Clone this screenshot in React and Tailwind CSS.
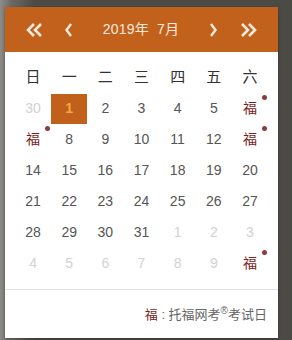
const weeks = ["日", "一", "二", "三", "四", "五", "六"];

// [label, kind] kind: "o" other month, "n" normal, "s" selected, "f" exam day
const days = [
  ["30", "o"], ["1", "s"], ["2", "n"], ["3", "n"], ["4", "n"], ["5", "n"], ["福", "f"],
  ["福", "f"], ["8", "n"], ["9", "n"], ["10", "n"], ["11", "n"], ["12", "n"], ["福", "f"],
  ["14", "n"], ["15", "n"], ["16", "n"], ["17", "n"], ["18", "n"], ["19", "n"], ["20", "n"],
  ["21", "n"], ["22", "n"], ["23", "n"], ["24", "n"], ["25", "n"], ["26", "n"], ["27", "n"],
  ["28", "n"], ["29", "n"], ["30", "n"], ["31", "n"], ["1", "o"], ["2", "o"], ["3", "o"],
  ["4", "o"], ["5", "o"], ["6", "o"], ["7", "o"], ["8", "o"], ["9", "o"], ["福", "f"],
];

function Chevron({ double, flip }) {
  return (
    <svg width={double ? 18 : 10} height="16" viewBox={double ? "0 0 18 16" : "0 0 10 16"} className={flip ? "-scale-x-100" : ""}>
      {double ? (
        <>
          <path d="M9 2 L3 8 L9 14" fill="none" stroke="#fbe9dc" strokeWidth="2.6" />
          <path d="M16 2 L10 8 L16 14" fill="none" stroke="#fbe9dc" strokeWidth="2.6" />
        </>
      ) : (
        <path d="M7 2 L2.5 8 L7 14" fill="none" stroke="#fbe9dc" strokeWidth="2.4" />
      )}
    </svg>
  );
}

function Day({ label, kind }) {
  if (kind === "s") {
    return (
      <div className="flex h-[31px] items-center justify-center">
        <div className="flex h-[30px] w-[36px] items-center justify-center bg-[#c1601b] text-[14px] font-bold text-[#f4a640]">
          {label}
        </div>
      </div>
    );
  }
  if (kind === "f") {
    return (
      <div className="relative flex h-[31px] items-center justify-center text-[14px] text-[#7c1f22]">
        {label}
        <span className="absolute left-[30px] top-[2px] h-[5px] w-[5px] rounded-full bg-[#8c3b3e]" />
      </div>
    );
  }
  return (
    <div className={"flex h-[31px] items-center justify-center text-[14px] " + (kind === "o" ? "text-[#d2d2d2]" : "text-[#555555]")}>
      {label}
    </div>
  );
}

export default function App() {
  return (
    <div
      className="h-[340px] w-[292px] bg-[linear-gradient(to_right,#8d8b88_0%,#6b6965_4%,#4c4a45_12%,#4c4a45_100%)] pl-[5px] pt-[7px]"
      style={{ fontFamily: '"Liberation Sans", "Noto Sans CJK SC", sans-serif' }}
    >
      <div className="w-[273px] bg-white shadow-[0_1px_3px_rgba(0,0,0,0.3)]">
        {/* header */}
        <div className="flex h-[45px] items-center bg-[#c2611c] px-[10px] text-[#fbe9dc]">
          <div className="flex w-[36px] justify-center pl-[1px]"><Chevron double /></div>
          <div className="flex w-[36px] justify-center"><Chevron /></div>
          <div className="flex w-[108px] justify-center text-[14px] tracking-[0.2px]">2019年&nbsp;&nbsp;7月</div>
          <div className="flex w-[36px] justify-center"><Chevron flip /></div>
          <div className="flex w-[36px] justify-center"><Chevron double flip /></div>
        </div>

        {/* body */}
        <div className="px-[10px] pt-[10px]">
          <div className="grid grid-cols-7">
            {weeks.map((w) => (
              <div key={w} className="flex h-[31px] items-center justify-center text-[15px] text-[#333333]">
                {w}
              </div>
            ))}
            {days.map(([label, kind], i) => (
              <Day key={i} label={label} kind={kind} />
            ))}
          </div>
        </div>

        {/* legend */}
        <div className="mt-[10px] border-t border-[#e3e3e3] px-[11px] pb-[13px] pt-[15px] text-right text-[13px] text-[#666666]">
          <span className="text-[#7c1f22]">福</span> : 托福网考<sup className="text-[10px]">®</sup>考试日
        </div>
      </div>
    </div>
  );
}
